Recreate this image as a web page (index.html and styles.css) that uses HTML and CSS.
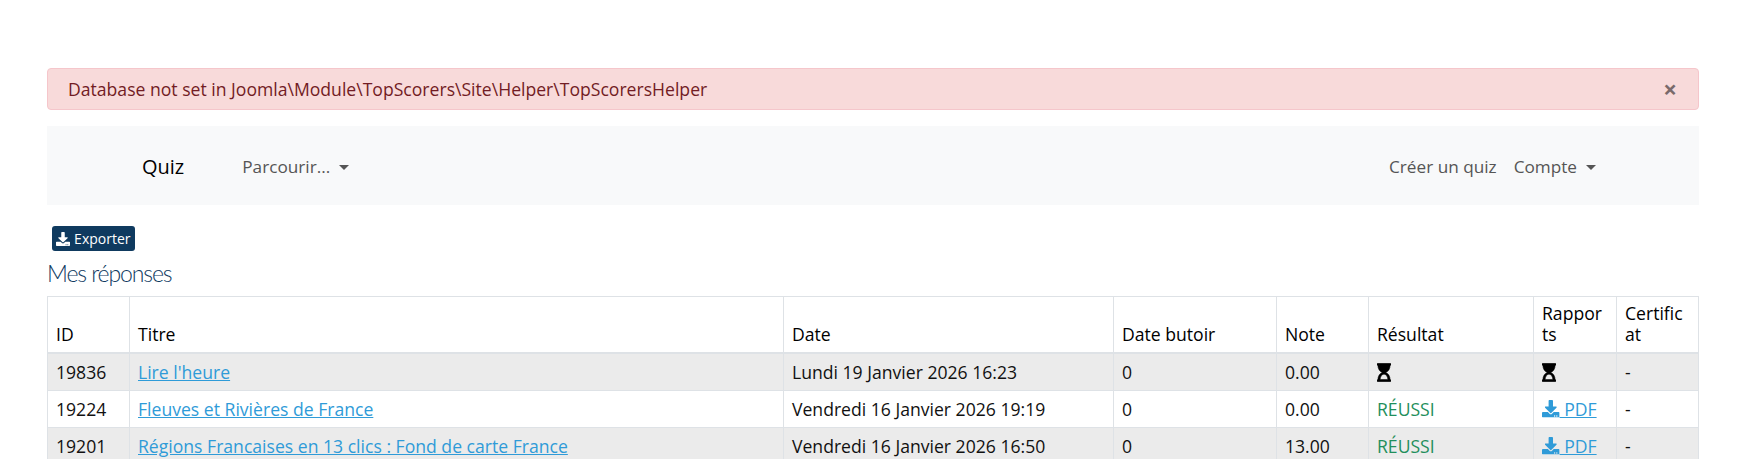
FILE: index.html
```html
<!DOCTYPE html>
<html lang="fr">
<head>
<meta charset="utf-8">
<title>Mes réponses</title>
<link rel="stylesheet" href="styles.css">
</head>
<body>
<svg class="defs" aria-hidden="true">
  <symbol id="i-dl" viewBox="0 0 512 512"><path d="M216 0h80c13.300 0 24 10.700 24 24v168h87.700c17.800 0 26.700 21.500 14.100 34.100L269.700 378.300c-7.500 7.500-19.800 7.500-27.300 0L90.100 226.100c-12.600-12.600-3.700-34.100 14.100-34.100H192V24c0-13.300 10.700-24 24-24zm296 376v112c0 13.300-10.700 24-24 24H24c-13.300 0-24-10.700-24-24V376c0-13.300 10.700-24 24-24h146.700l49 49c20.100 20.100 52.500 20.100 72.600 0l49-49H488c13.300 0 24 10.700 24 24zm-124 88c0-11-9-20-20-20s-20 9-20 20 9 20 20 20 20-9 20-20zm64 0c0-11-9-20-20-20s-20 9-20 20 9 20 20 20 20-9 20-20z"/></symbol>
  <symbol id="i-hg" viewBox="0 0 384 512"><path d="M360 0H24C10.700 0 0 10.700 0 24v16c0 13.300 10.700 24 24 24 0 91 51 167.700 120.800 192C75 280.300 24 357 24 448c-13.300 0-24 10.700-24 24v16c0 13.300 10.700 24 24 24h336c13.300 0 24-10.700 24-24v-16c0-13.300-10.700-24-24-24 0-91-51-167.700-120.800-192C309 231.700 360 155 360 64c13.300 0 24-10.700 24-24V24c0-13.300-10.700-24-24-24zM296 448H88c0-77.500 46.200-144 104-144s104 66.500 104 144z"/></symbol>
</svg>
<div class="page">
  <div class="alert">
    <span>Database not set in Joomla\Module\TopScorers\Site\Helper\TopScorersHelper</span>
    <button class="close" type="button">×</button>
  </div>
  <nav class="navbar">
    <a class="brand" href="#">Quiz</a>
    <a class="nav-link caret" href="#">Parcourir...</a>
    <div class="nav-right">
      <a class="nav-link" href="#">Créer un quiz</a>
      <a class="nav-link caret" href="#">Compte</a>
    </div>
  </nav>
  <a class="btn-export" href="#"><svg class="icon"><use href="#i-dl"/></svg> Exporter</a>
  <h2 class="title">Mes réponses</h2>
  <table class="results">
    <colgroup>
      <col class="c-id"><col class="c-title"><col class="c-date"><col class="c-due"><col class="c-note"><col class="c-res"><col class="c-rep"><col class="c-cert">
    </colgroup>
    <thead>
      <tr><th>ID</th><th>Titre</th><th>Date</th><th>Date butoir</th><th>Note</th><th>Résultat</th><th>Rappor<br>ts</th><th>Certific<br>at</th></tr>
    </thead>
    <tbody>
      <tr>
        <td>19836</td><td><a href="#">Lire l'heure</a></td><td>Lundi 19 Janvier 2026 16:23</td><td>0</td><td>0.00</td>
        <td><svg class="hourglass"><use href="#i-hg"/></svg></td><td><svg class="hourglass"><use href="#i-hg"/></svg></td><td>-</td>
      </tr>
      <tr>
        <td>19224</td><td><a href="#">Fleuves et Rivières de France</a></td><td>Vendredi 16 Janvier 2026 19:19</td><td>0</td><td>0.00</td>
        <td class="pass">RÉUSSI</td><td><a href="#"><svg class="icon"><use href="#i-dl"/></svg> PDF</a></td><td>-</td>
      </tr>
      <tr>
        <td>19201</td><td><a href="#">Régions Francaises en 13 clics : Fond de carte France</a></td><td>Vendredi 16 Janvier 2026 16:50</td><td>0</td><td>13.00</td>
        <td class="pass">RÉUSSI</td><td><a href="#"><svg class="icon"><use href="#i-dl"/></svg> PDF</a></td><td>-</td>
      </tr>
    </tbody>
  </table>
</div>
</body>
</html>
```
FILE: styles.css
```css
* { box-sizing: border-box; }
html, body { margin: 0; height: 459px; overflow: hidden; background: #fff; }
body { font-family: "Open Sans", "Noto Sans", sans-serif; font-size: 17.6px; line-height: 24px; color: #111; }
.defs { display: none; }
.page { padding: 68px 52px 0 47px; }
.alert { display: flex; justify-content: space-between; align-items: center; height: 42px; padding: 0 21px 0 20px; background: #f8dada; border: 1px solid #f5c6cb; border-radius: 4px; color: #721c24; margin-bottom: 16px; }
.close { border: 0; padding: 0; background: none; font: 700 24px/1 "Open Sans", sans-serif; color: #7a6a6b; }
.navbar { display: flex; align-items: center; height: 79px; padding: 2px 103px 0 95px; background: #f8f9fa; margin-bottom: 21px; }
.brand { font-size: 20px; color: #000; text-decoration: none; margin-right: 58px; }
.nav-link { color: #555; text-decoration: none; font-size: 17.200px; }
.nav-right { margin-left: auto; display: flex; gap: 17px; }
.caret::after { content: ""; display: inline-block; margin-left: 9px; vertical-align: 3px; border-top: 5px solid; border-left: 5.500px solid transparent; border-right: 5.500px solid transparent; }
.btn-export { display: block; width: 83px; height: 25px; margin-left: 5px; background: #0f3a5f; border-radius: 3px; color: #fff; font-size: 14px; line-height: 25px; text-decoration: none; text-align: center; white-space: nowrap; }
.icon { width: 1em; height: 1em; fill: currentColor; vertical-align: -2px; }
.title { margin: 6px 0 7px; font: 300 23px/32px Lato, sans-serif; letter-spacing: -1.1px; color: #0f3a5f; }
.results { width: 1651px; table-layout: fixed; border-collapse: collapse; }
.c-id { width: 82px; } .c-title { width: 654px; } .c-date { width: 330px; } .c-due { width: 163px; }
.c-note { width: 92px; } .c-res { width: 165px; } .c-rep { width: 83px; } .c-cert { width: 82px; }
.results th, .results td { border: 1px solid #dee2e6; padding: 6px 8px; text-align: left; font-weight: 400; }
.results th { vertical-align: bottom; color: #000; padding-top: 6px; padding-bottom: 7px; border-bottom-width: 2px; line-height: 21px; white-space: nowrap; overflow: hidden; }
.results td { height: 37px; vertical-align: middle; line-height: 24px; }
.results tbody tr:nth-child(odd) { background: #ebebeb; }
.results a { color: #2f9bd8; }
.pass { color: #1f8f5c; }
.hourglass { display: block; width: 14px; height: 19px; fill: #000; stroke: #000; stroke-width: 14px; }
```
